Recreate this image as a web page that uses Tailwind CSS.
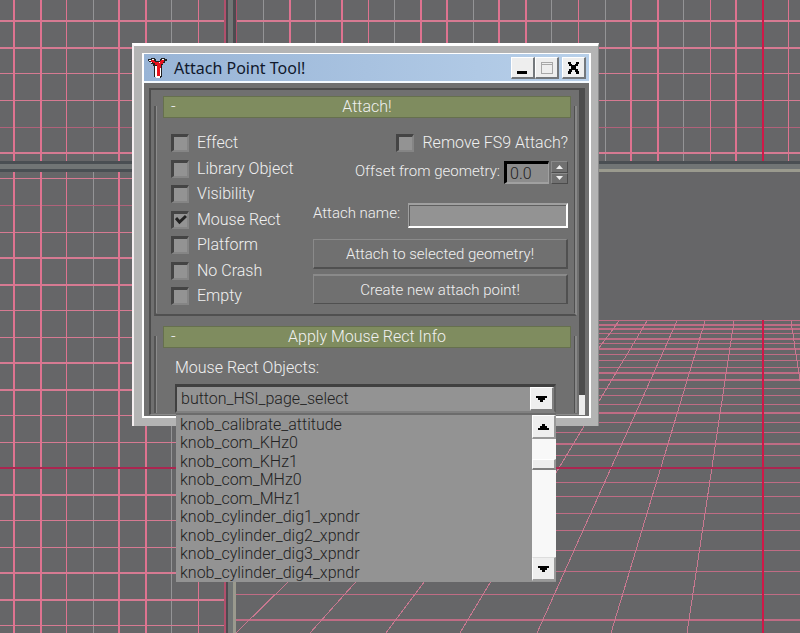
<!DOCTYPE html>
<html lang="en">
<head>
    <meta charset="UTF-8">
    <meta name="viewport" content="width=device-width, initial-scale=1.0">
    <script src="https://cdn.jsdelivr.net/npm/@tailwindcss/browser@4"></script>
    <title>Attach Point Tool!</title>
</head>
<body class="relative min-h-screen overflow-hidden bg-[#666668] font-['Roboto',sans-serif] text-base leading-5 font-light text-[#f0f0f0]">

    <!-- viewports -->
    <svg class="absolute inset-0 h-full w-full" fill="none" shape-rendering="crispEdges" aria-hidden="true">
        <!-- top and left grid -->
        <g stroke="#949496">
            <path d="M93.500 0v2000M171.500 0v2000M263.500 0v161M315.500 0v161M394.500 0v161M473.500 0v161M551.500 0v161M605.500 0v161M683.500 0v161"/>
        </g>
        <g stroke="#d67a92">
            <path stroke-width="2" d="M0 21h2000M0 48h2000M0 153h2000M0 258h225M0 285h225M0 363h225M0 390h225M0 495h225M0 573h225M0 600h225"/>
            <path d="M0 73.500h2000M0 100.500h2000M0 178.500h225M0 232.500h225M0 310.500h225M0 337.500h225M0 415.500h225M0 442.500h225M0 520.500h225M0 547.500h225M0 625.500h225"/>
            <path stroke="#b0627a" d="M0 127.500h2000M0 205.500h225"/>
        </g>
        <g stroke="#de7390">
            <path stroke-width="2" d="M14 0v2000M41 0v2000M119 0v2000M146 0v2000M290 0v161M342 0v161M421 0v161M447 0v161M499 0v161M526 0v161M631 0v161M658 0v161M736 0v161"/>
            <path d="M66.500 0v2000M198.500 0v2000M368.500 0v161M578.500 0v161M710.500 0v161M788.500 0v161"/>
        </g>
        <path stroke="#d01848" stroke-width="2" d="M763 0v161"/>

        <!-- perspective view -->
        <path fill="#666668" d="M236 172h2000v2000h-2000z"/>
        <g stroke="#bf6c84">
            <path d="M236 320.500h2000M236 333.500h2000M236 343.500h2000M236 354.500h2000M236 360.500h2000M236 367.500h2000M236 388.500h2000M236 395.500h2000M236 404.500h2000M236 422.500h2000M236 432.500h2000M236 455.500h2000M236 482.500h2000M236 496.500h2000M236 513.500h2000M236 530.500h2000M236 550.500h2000M236 571.500h2000M236 594.500h2000"/>
            <path stroke-width="2" d="M236 325h2000M236 329h2000M236 339h2000M236 349h2000M236 373h2000M236 380h2000M236 413h2000M236 444h2000M236 620h2000"/>
        </g>
        <path stroke="#c87890" d="M619 321L386 633M647 321L460 633M677 321L537 633M705 321L611 633M734 321L687 633M791 321L842 660M533 384L310 633M456 417L236 633"/>
        <path stroke="#d01848" stroke-width="2" d="M763 320v2000"/>
        <path stroke="#ab2650" stroke-width="2" d="M0 468h2000"/>

        <!-- splitters -->
        <path fill="#4a4f53" d="M0 161h2000v11h-2000z"/>
        <path fill="#717575" d="M0 164h2000v5h-2000z"/>
        <path fill="#9a9a8e" d="M233 169h2000v3h-2000z"/>
        <path fill="#4c4c50" d="M226 0h10v161h-10zM226 172h10v2000h-10z"/>
        <path fill="#717575" d="M228 0h5v2000h-5z"/>
        <path fill="#9a9a8e" d="M233 172h3v2000h-3z"/>
        <path fill="#b0506c" d="M224 0h2v161h-2zM236 0h1v161h-1zM224 172h2v2000h-2z"/>
    </svg>

    <!-- tool window -->
    <main class="absolute top-[43px] left-[132px] w-[467px] border-t-3 border-r border-l-2 border-t-white border-r-[#8c8c8c] border-l-[#f4eef0] bg-[#b4b4b4] pt-[7px] pr-[7px] pb-2 pl-2">
        <div class="border-2 border-t border-white bg-[#707070]">

            <header class="flex h-[29px] items-center border-b-2 border-[#f4faff] bg-linear-to-r from-[#98b4d6] to-[#b8d0ea] pr-[3px] pl-[3px]">
                <svg class="mr-[5px] h-[22px] w-[22px]" viewBox="0 0 22 22" shape-rendering="crispEdges" aria-hidden="true">
                    <path fill="#222" d="M1 2h3v-1h4v1h1v2h4v-2h1v-1h4v1h2v2h-2v2h-2v2h-1v12h-1v1h-5v-1h-2v-11h-1v-2h-2v-2h-2v-1h-1z"/>
                    <path fill="#fff" d="M2 3h2v1h-2zM5 2h2v1h-2zM8 9h2v10h3v2h-4v-1h-1zM15 2h2v1h-2zM4 5h1v1h-1zM9 5h1v1h-1z"/>
                    <path fill="#e8101c" d="M4 3h3v1h1v1h5v-1h1v-1h3v2h-1v2h-2v12h-4v-11h-2v-2h-2v-1h-2z"/>
                    <path fill="#fff" d="M13 11h1v8h-1zM12 5h1v1h-1z"/>
                </svg>
                <h1 class="flex-1 font-['Noto_Sans','Open_Sans',sans-serif] text-base font-normal text-[#10182c]">Attach Point Tool!</h1>
                <button type="button" aria-label="Minimize" class="h-[22px] w-6 border-t border-r-2 border-b-2 border-l border-t-white border-r-[#74787c] border-b-[#74787c] border-l-white bg-[#eeeeee]">
                    <svg class="h-full w-full" viewBox="0 0 21 19" shape-rendering="crispEdges"><path d="M5 13h10v3h-10z"/></svg>
                </button>
                <button type="button" aria-label="Maximize" class="mr-[3px] h-[22px] w-6 border-t border-r-2 border-b-2 border-l border-t-white border-r-[#74787c] border-b-[#74787c] border-l-white bg-[#eeeeee]">
                    <svg class="h-full w-full" viewBox="0 0 21 19" fill="none" shape-rendering="crispEdges"><path stroke="#a8a8a8" d="M5 4.500h12M5.500 4v12M16.500 4v12M5 15.500h12M5 6h11"/></svg>
                </button>
                <button type="button" aria-label="Close" class="h-[22px] w-6 border-t border-r-2 border-b-2 border-l border-t-white border-r-[#74787c] border-b-[#74787c] border-l-white bg-[#eeeeee]">
                    <svg class="h-full w-full" viewBox="0 0 21 19" shape-rendering="crispEdges"><path d="M5 4h3v2h1v1h3v-1h1v-2h3v2h-1v2h-2v3h2v2h1v3h-3v-2h-1v-2h-3v2h-1v2h-3v-3h1v-2h2v-3h-2v-2h-1z"/></svg>
                </button>
            </header>

            <div class="flex h-[333px] pt-[5px] pr-1 pb-px pl-[5px]">
                <div class="min-w-0 flex-1 border-t-2 border-b border-l-2 border-t-[#4c4c4c] border-b-[#8c8c8c] border-l-[#4c4c4c] pr-[2px] pl-[3px]">

                    <!-- Attach! -->
                    <section class="relative mt-[6px]">
                        <div class="absolute top-[10px] -bottom-[3px] left-0 w-full border-r-2 border-b-2 border-l-2 border-r-[#888888] border-b-[#505050] border-l-[#555555]"></div>
                        <div class="absolute top-[10px] bottom-0 left-[2px] w-px bg-[#8c8c8c]"></div>
                        <div class="absolute top-[10px] right-[2px] bottom-0 w-px bg-[#505050]"></div>
                        <div class="relative pr-[6px] pl-[9px]">
                            <h2 class="relative border border-[#66704e] bg-[#7f8c5f] text-center font-light">
                                <button type="button" aria-label="Collapse Attach!" class="absolute left-[7px] leading-[19px]">-</button>
                                Attach!
                            </h2>
                        </div>

                        <form class="relative flex justify-between pt-4 pr-[9px] pb-2 pl-[17px]">
                            <div class="flex h-[171px] flex-col justify-between">
                                <label class="flex h-[18px] items-center gap-2 leading-[18px] whitespace-nowrap"><input type="checkbox" class="h-[18px] w-[18px] appearance-none border-t-3 border-r-2 border-b-2 border-l-3 border-t-[#444444] border-r-[#858585] border-b-[#858585] border-l-[#444444] bg-[#939393]">Effect</label>
                                <label class="flex h-[18px] items-center gap-2 leading-[18px] whitespace-nowrap"><input type="checkbox" class="h-[18px] w-[18px] appearance-none border-t-3 border-r-2 border-b-2 border-l-3 border-t-[#444444] border-r-[#858585] border-b-[#858585] border-l-[#444444] bg-[#939393]">Library Object</label>
                                <label class="flex h-[18px] items-center gap-2 leading-[18px] whitespace-nowrap"><input type="checkbox" class="h-[18px] w-[18px] appearance-none border-t-3 border-r-2 border-b-2 border-l-3 border-t-[#444444] border-r-[#858585] border-b-[#858585] border-l-[#444444] bg-[#939393]">Visibility</label>
                                <label class="relative flex h-[18px] items-center gap-2 leading-[18px] whitespace-nowrap"><input type="checkbox" checked class="peer h-[18px] w-[18px] appearance-none border-t-3 border-r-2 border-b-2 border-l-3 border-t-[#444444] border-r-[#858585] border-b-[#858585] border-l-[#444444] bg-[#939393]">
                                    <svg class="absolute left-1 hidden h-3 w-3 peer-checked:block" viewBox="0 0 12 12" fill="none"><path stroke="#222" stroke-width="3" d="M1 4l3.500 4L11 2"/></svg>Mouse Rect</label>
                                <label class="flex h-[18px] items-center gap-2 leading-[18px] whitespace-nowrap"><input type="checkbox" class="h-[18px] w-[18px] appearance-none border-t-3 border-r-2 border-b-2 border-l-3 border-t-[#444444] border-r-[#858585] border-b-[#858585] border-l-[#444444] bg-[#939393]">Platform</label>
                                <label class="flex h-[18px] items-center gap-2 leading-[18px] whitespace-nowrap"><input type="checkbox" class="h-[18px] w-[18px] appearance-none border-t-3 border-r-2 border-b-2 border-l-3 border-t-[#444444] border-r-[#858585] border-b-[#858585] border-l-[#444444] bg-[#939393]">No Crash</label>
                                <label class="flex h-[18px] items-center gap-2 leading-[18px] whitespace-nowrap"><input type="checkbox" class="h-[18px] w-[18px] appearance-none border-t-3 border-r-2 border-b-2 border-l-3 border-t-[#444444] border-r-[#858585] border-b-[#858585] border-l-[#444444] bg-[#939393]">Empty</label>
                            </div>

                            <div class="flex w-[255px] flex-col items-end text-[15px]">
                                <label class="flex h-[18px] items-center gap-2 text-base leading-[18px] whitespace-nowrap"><input type="checkbox" class="h-[18px] w-[18px] appearance-none border-t-3 border-r-2 border-b-2 border-l-3 border-t-[#444444] border-r-[#858585] border-b-[#858585] border-l-[#444444] bg-[#939393]">Remove FS9 Attach?</label>

                                <div class="mt-[9px] flex h-[23px] items-start">
                                    <label for="offset" class="mr-1 whitespace-nowrap">Offset from geometry:</label>
                                    <input id="offset" type="text" value="0.0" class="h-[23px] w-[45px] border-t-3 border-r border-b-2 border-l-3 border-t-black border-r-[#a0a0a0] border-b-[#a0a0a0] border-l-black bg-[#8c8c8c] pl-[3px] text-base leading-[18px] text-[#222]">
                                    <div class="ml-[2px] flex h-[23px] w-[17px] flex-col">
                                        <button type="button" aria-label="Increase" class="flex flex-1 items-center justify-center border border-t-[#8a8a8a] border-r-[#4c4c4c] border-b-[#4c4c4c] border-l-[#8a8a8a]"><svg class="h-1 w-[7px]" viewBox="0 0 7 4" fill="#f0f0f0"><path d="M3.500 0L7 4H0z"/></svg></button>
                                        <button type="button" aria-label="Decrease" class="flex flex-1 items-center justify-center border border-t-[#8a8a8a] border-r-[#4c4c4c] border-b-[#4c4c4c] border-l-[#8a8a8a]"><svg class="h-1 w-[7px]" viewBox="0 0 7 4" fill="#f0f0f0"><path d="M0 0h7L3.500 4z"/></svg></button>
                                    </div>
                                </div>

                                <div class="mt-[19px] flex w-full items-start justify-between">
                                    <label for="attachName" class="whitespace-nowrap">Attach name:</label>
                                    <input id="attachName" type="text" class="h-[25px] w-40 border-t-2 border-r-2 border-b-2 border-l border-t-[#a0a0a0] border-r-white border-b-white border-l-[#a0a0a0] bg-[#939393] px-1 text-[#222] inset-shadow-[1px_1px_#606060]">
                                </div>

                                <button type="button" class="mt-[11px] h-[30px] w-full border-t border-r-2 border-b-2 border-l border-t-[#8a8a8a] border-r-[#505050] border-b-[#505050] border-l-[#8a8a8a]">Attach to selected geometry!</button>
                                <button type="button" class="mt-[5px] h-[30px] w-full border-t-2 border-r-2 border-b border-l border-t-[#8a8a8a] border-r-[#505050] border-b-[#505050] border-l-[#8a8a8a]">Create new attach point!</button>
                            </div>
                        </form>
                    </section>

                    <!-- Apply Mouse Rect Info -->
                    <section class="relative mt-[13px]">
                        <div class="absolute top-[10px] bottom-0 left-0 w-full border-r-2 border-l-2 border-r-[#888888] border-l-[#555555]"></div>
                        <div class="absolute top-[10px] bottom-0 left-[2px] w-px bg-[#8c8c8c]"></div>
                        <div class="absolute top-[10px] right-[2px] bottom-0 w-px bg-[#505050]"></div>
                        <div class="relative pr-[6px] pl-[9px]">
                            <h2 class="relative border border-[#66704e] bg-[#7f8c5f] text-center font-light">
                                <button type="button" aria-label="Collapse Apply Mouse Rect Info" class="absolute left-[7px] leading-[19px]">-</button>
                                Apply Mouse Rect Info
                            </h2>
                        </div>

                        <div class="relative pt-[10px] pr-[21px] pl-[21px]">
                            <label for="rectObjects" class="block">Mouse Rect Objects:</label>
                            <div class="relative mt-[6px]">
                                <select id="rectObjects" class="block h-[29px] w-full appearance-none border-t-3 border-r-2 border-b-2 border-l-2 border-t-[#404040] border-r-[#606060] border-b-[#808080] border-l-[#404040] bg-[#939393] pl-1 text-[#222]">
                                    <option>button_HSI_page_select</option>
                                </select>
                                <span class="pointer-events-none absolute top-[3px] right-[2px] flex h-6 w-6 items-center justify-center border-t border-r-2 border-b-2 border-l border-t-white border-r-[#808080] border-b-[#808080] border-l-white bg-[#eeeeee]">
                                    <svg class="h-[6px] w-[11px]" viewBox="0 0 11 6" shape-rendering="crispEdges"><path d="M0 0h11v2h-2v2h-2v2H4V4H2V2H0z"/></svg>
                                </span>

                                <div class="absolute top-full left-px right-0 z-10 flex h-[169px] border-t-2 border-[#6c6c6c] bg-[#939393]">
                                    <ul role="listbox" aria-label="Mouse Rect Objects" class="grid flex-1 grid-rows-9 overflow-hidden pt-px pl-1 leading-[18px] text-[#222]">
                                        <li role="option">knob_calibrate_attitude</li>
                                        <li role="option">knob_com_KHz0</li>
                                        <li role="option">knob_com_KHz1</li>
                                        <li role="option">knob_com_MHz0</li>
                                        <li role="option">knob_com_MHz1</li>
                                        <li role="option">knob_cylinder_dig1_xpndr</li>
                                        <li role="option">knob_cylinder_dig2_xpndr</li>
                                        <li role="option">knob_cylinder_dig3_xpndr</li>
                                        <li role="option">knob_cylinder_dig4_xpndr</li>
                                    </ul>
                                    <div class="mb-px flex w-6 flex-col bg-[#f8f8f8]">
                                        <button type="button" aria-label="Scroll up" class="flex h-6 items-center justify-center border-t border-r-2 border-b-2 border-l border-t-white border-r-[#999999] border-b-[#999999] border-l-white bg-[#eeeeee]">
                                            <svg class="h-[6px] w-[11px]" viewBox="0 0 11 6" shape-rendering="crispEdges"><path d="M0 6h11V4H9V2H7V0H4v2H2v2H0z"/></svg>
                                        </button>
                                        <div class="mt-5 h-[11px] border-t border-r-2 border-b-2 border-l border-t-white border-r-[#999999] border-b-[#808080] border-l-white bg-[#eeeeee]"></div>
                                        <button type="button" aria-label="Scroll down" class="mt-auto flex h-6 items-center justify-center border-t border-r-2 border-b-2 border-l border-t-[#dddddd] border-r-[#999999] border-b-[#999999] border-l-white bg-[#eeeeee]">
                                            <svg class="h-[6px] w-[11px]" viewBox="0 0 11 6" shape-rendering="crispEdges"><path d="M0 0h11v2h-2v2h-2v2H4V4H2V2H0z"/></svg>
                                        </button>
                                    </div>
                                </div>
                            </div>
                        </div>
                    </section>
                </div>

                <!-- panel scroll bar -->
                <div class="flex w-[6px] flex-col justify-end bg-[#4c4c4c]">
                    <div class="h-5 bg-[#ececec]"></div>
                </div>
            </div>
        </div>
    </main>

</body>
</html>
